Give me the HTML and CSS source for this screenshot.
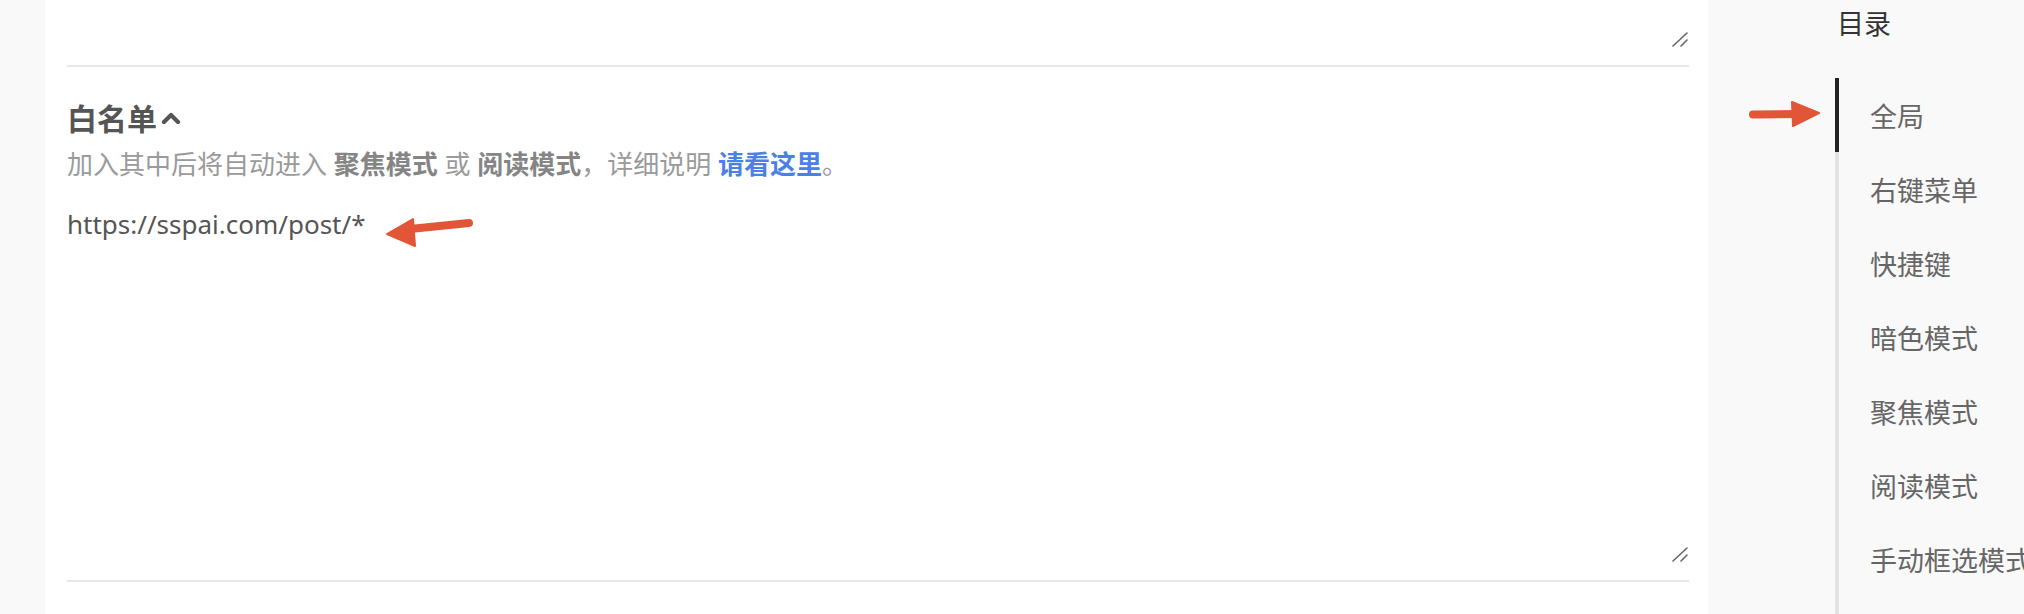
FILE: index.html
```html
<!DOCTYPE html>
<html lang="zh-CN">
<head>
<meta charset="utf-8">
<title>白名单</title>
<link rel="stylesheet" href="styles.css">
</head>
<body>
<div class="page">
  <div class="gutter"></div>
  <main class="card">
    <div class="ta-wrap">
      <textarea class="ta ta-top" aria-label="黑名单"></textarea>
      <svg class="grip" width="16" height="15" viewBox="0 0 16 15"><path d="M1 14 L15 1 M9 14 L15 8" stroke="#666" stroke-width="1.6" stroke-linecap="round" fill="none"/></svg>
    </div>
    <div class="divider"></div>
    <section class="section">
      <h2 class="heading">白名单
        <svg class="chev" width="22" height="12" viewBox="0 0 22 12"><polyline points="4,10 11,3 18,10" fill="none" stroke="#555" stroke-width="4.2" stroke-linecap="round" stroke-linejoin="round"/></svg>
      </h2>
      <p class="desc">加入其中后将自动进入 <b>聚焦模式</b> 或 <b>阅读模式</b>，详细说明 <a class="link" href="#">请看这里</a>。</p>
      <div class="ta-wrap">
        <textarea class="ta ta-main" aria-label="白名单">https://sspai.com/post/*</textarea>
        <svg class="grip" width="16" height="15" viewBox="0 0 16 15"><path d="M1 14 L15 1 M9 14 L15 8" stroke="#666" stroke-width="1.6" stroke-linecap="round" fill="none"/></svg>
      </div>
    </section>
    <div class="divider"></div>
    <svg class="arrow arrow-left" width="100" height="40" viewBox="0 0 100 40">
      <path d="M28 14 L87 8" stroke="#e25537" stroke-width="8" stroke-linecap="round" fill="none"/>
      <polygon points="5,19 31,4 33,31" fill="#e25537" stroke="#e25537" stroke-width="2" stroke-linejoin="round"/>
    </svg>
  </main>
  <aside class="toc">
    <div class="toc-title">目录</div>
    <ul class="toc-list">
      <li class="toc-item active">全局</li>
      <li class="toc-item">右键菜单</li>
      <li class="toc-item">快捷键</li>
      <li class="toc-item">暗色模式</li>
      <li class="toc-item">聚焦模式</li>
      <li class="toc-item">阅读模式</li>
      <li class="toc-item">手动框选模式</li>
    </ul>
    <svg class="arrow arrow-right" width="80" height="30" viewBox="0 0 80 30">
      <path d="M5 15.5 L50 15" stroke="#e25537" stroke-width="8" stroke-linecap="round" fill="none"/>
      <polygon points="44,3 71,14 45,27" fill="#e25537" stroke="#e25537" stroke-width="2" stroke-linejoin="round"/>
    </svg>
  </aside>
</div>
</body>
</html>
```

FILE: styles.css
```css
* { box-sizing: border-box; }
html, body {
  margin: 0;
  padding: 0;
  background: #f9f9f9;
  height: 614px;
  overflow: hidden;
  font-family: "Noto Sans", "Noto Sans CJK SC", sans-serif;
}
.page {
  display: flex;
  height: 614px;
  overflow: hidden;
}
.gutter {
  width: 45px;
  flex: none;
  background: #f9f9f9;
}
.card {
  position: relative;
  width: 1663px;
  flex: none;
  background: #fff;
  padding: 0 19px 0 22px;
  display: flex;
  flex-direction: column;
}
.ta-wrap {
  position: relative;
}
.ta {
  display: block;
  width: 100%;
  border: none;
  outline: none;
  padding: 0;
  margin: 0;
  background: transparent;
  font-family: "Noto Sans", "Noto Sans CJK SC", sans-serif;
  font-size: 26px;
  line-height: 36px;
  color: #555;
  resize: none;
}
.grip {
  position: absolute;
  right: 1px;
  bottom: 2px;
  display: block;
}
.ta-top {
  height: 49px;
}
.ta-main {
  height: 382px;
  padding-top: 24px;
}
.divider {
  height: 2px;
  background: #e8e8e8;
  margin-top: 16px;
  flex: none;
}
.section {
  padding-top: 34px;
}
.heading {
  margin: 0;
  font-size: 30px;
  line-height: 36px;
  font-weight: 700;
  color: #555;
  display: flex;
  align-items: center;
  gap: 3px;
}
.chev { display: block; margin-top: -3px; }
.desc {
  margin: 9px 0 0;
  font-size: 26px;
  line-height: 36px;
  color: #9a9a9a;
}
.desc b {
  color: #858585;
  font-weight: 700;
}
.link {
  color: #4a80e8;
  font-weight: 700;
  text-decoration: none;
}
.arrow {
  position: absolute;
}
.arrow-left {
  left: 337px;
  top: 215px;
}
.toc {
  position: relative;
  flex: 1;
  background: #f9f9f9;
  padding-left: 127px;
}
.toc-title {
  padding-top: 6px;
  padding-left: 2px;
  font-size: 27px;
  line-height: 36px;
  color: #333;
}
.toc-list {
  list-style: none;
  margin: 36px 0 0;
  padding: 0;
  border-left: 4px solid #e3e3e3;
  height: 536px;
}
.toc-item {
  height: 74px;
  display: flex;
  align-items: center;
  padding-left: 31px;
  font-size: 27px;
  color: #666;
  white-space: nowrap;
  margin-left: -4px;
  border-left: 4px solid transparent;
}
.toc-item.active {
  border-left-color: #222;
}
.arrow-right {
  left: 40px;
  top: 99px;
}
```
